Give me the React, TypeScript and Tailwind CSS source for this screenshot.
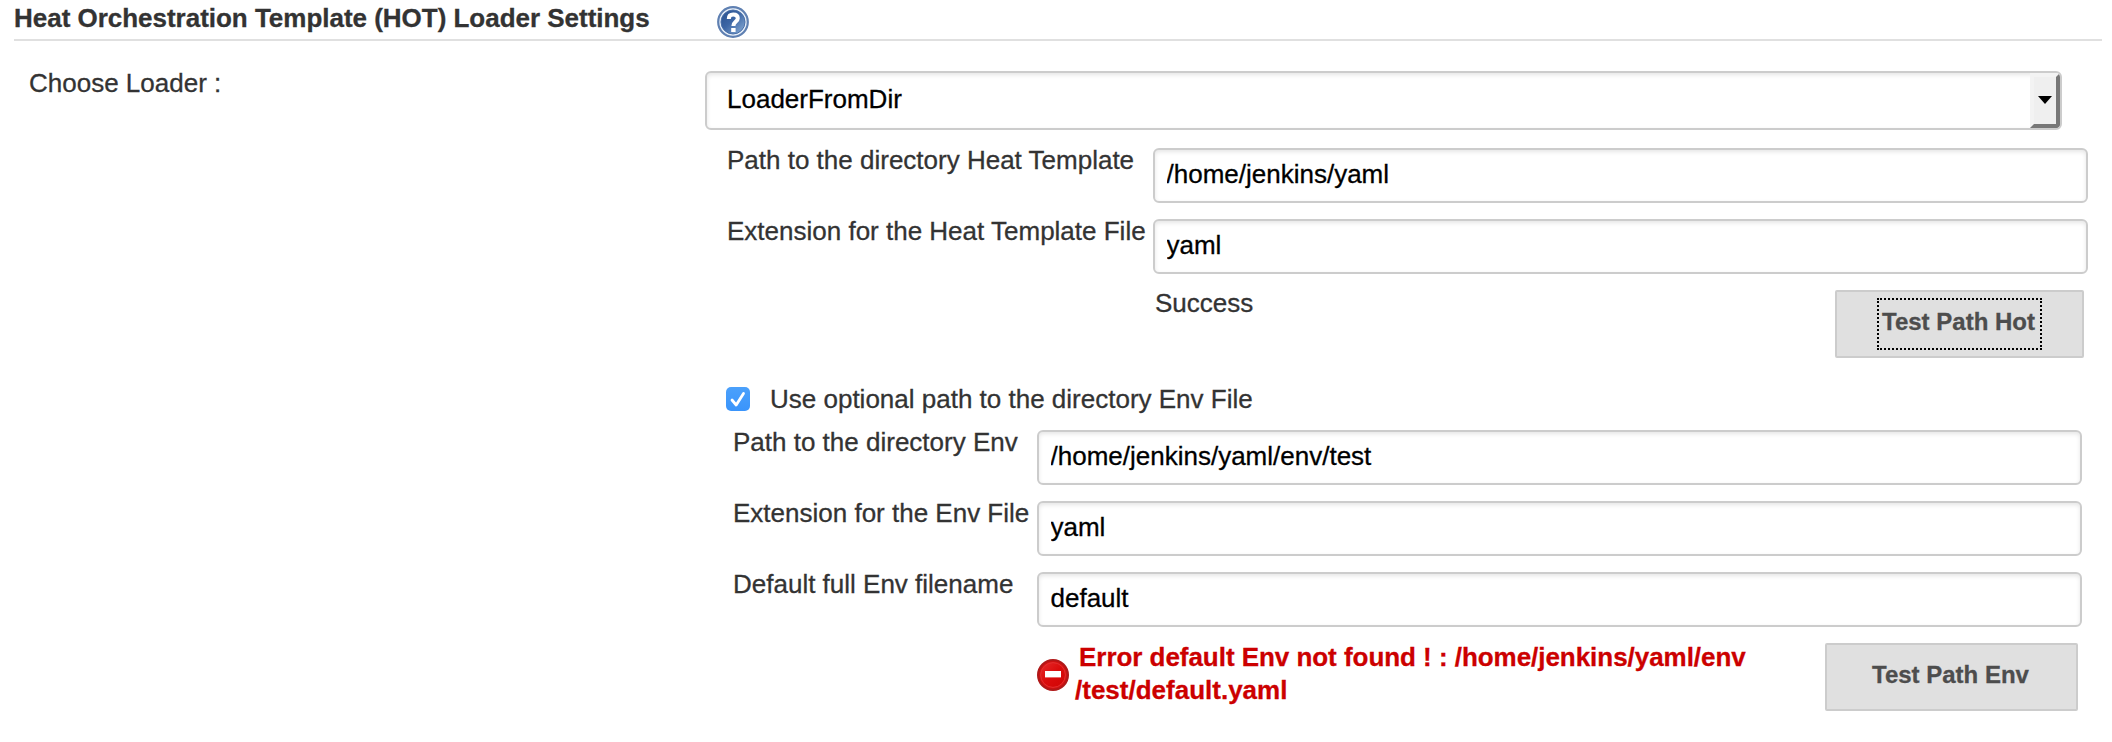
import React from "react";

const FONT = "font-['Liberation_Sans',Arial,sans-serif]";

function Field({ label, value, labelClass }: { label: string; value: string; labelClass: string }) {
  return (
    <label className="flex h-[71px]">
      <span className={`shrink-0 whitespace-nowrap ${labelClass}`}>{label}</span>
      <input
        type="text"
        defaultValue={value}
        className="h-[55px] min-w-0 flex-1 rounded-[6px] border-2 border-[#ccc] bg-white pt-[9px] pr-[12px] pb-[12px] pl-[11.5px] leading-[30px] text-black shadow-[inset_0_2px_4px_rgba(0,0,0,0.1)] outline-none"
      />
    </label>
  );
}

function HelpIcon() {
  return (
    <svg viewBox="0 0 32 32" className="block h-8 w-8">
      <defs>
        <linearGradient id="help-fill" x1="0" y1="0" x2="1" y2="1">
          <stop offset="0" stopColor="#28508e" />
          <stop offset="0.45" stopColor="#3c66a5" />
          <stop offset="1" stopColor="#8db0d8" />
        </linearGradient>
      </defs>
      <circle cx="16" cy="16" r="14.8" fill="#e6eef8" stroke="#5f80b2" strokeWidth="2.2" />
      <circle cx="16" cy="16" r="12" fill="url(#help-fill)" stroke="#4a70a9" strokeWidth="1" />
      <path d="M11.8 13C11.8 9.8 13.6 8.6 16.2 8.6C19 8.6 20.8 9.8 20.8 12.2C20.8 15.6 16.4 15.4 16.4 20" fill="none" stroke="#fff" strokeWidth="4" />
      <rect x="14.2" y="22" width="4.4" height="4" fill="#fff" />
    </svg>
  );
}

function ErrorIcon() {
  return (
    <svg viewBox="0 0 32 32" className="block h-8 w-8">
      <defs>
        <linearGradient id="error-fill" x1="0" y1="0" x2="1" y2="1">
          <stop offset="0" stopColor="#e62a2a" />
          <stop offset="0.5" stopColor="#da0c0c" />
          <stop offset="1" stopColor="#d00404" />
        </linearGradient>
      </defs>
      <circle cx="16" cy="16" r="14.9" fill="#d81010" stroke="#b01818" strokeWidth="2.2" />
      <circle cx="16" cy="16" r="12.4" fill="url(#error-fill)" stroke="#e23030" strokeWidth="1" />
      <rect x="8" y="12" width="16" height="6.4" fill="#fff" />
    </svg>
  );
}

export default function App() {
  return (
    <main className={`h-[742px] w-[2112px] overflow-hidden bg-white text-[26px] leading-[30px] text-[#333] [-webkit-text-stroke:0.3px] ${FONT}`}>
      <header className="ml-[14px] flex h-[41px] w-[2088px] border-b-2 border-[#e0e0e0] pt-[3px]">
        <h2 className="w-[703px] font-bold tracking-[-0.02px] whitespace-nowrap">Heat Orchestration Template (HOT) Loader Settings</h2>
        <div className="pt-[3px]">
          <HelpIcon />
        </div>
      </header>

      <div className="flex pt-[30px]">
        <div className="w-[705px] shrink-0 pl-[29px]">
          <span className="-mt-[3px] block">Choose Loader :</span>
        </div>

        <div className="flex w-[1383px] flex-col">
          <div className="flex h-[59px] w-[1357px] overflow-hidden rounded-[6px] border-2 border-[#ccc] shadow-[inset_0_2px_4px_rgba(0,0,0,0.1)]">
            <span className="flex-1 pt-[11px] pl-[20px] text-black">LoaderFromDir</span>
            <div className="flex w-[30px] justify-center rounded-r-[4px] border-4 border-t-[#f3f3f3] border-r-[#777] border-b-[#777] border-l-[#f3f3f3] bg-[#efefef] pt-[19px]">
              <svg viewBox="0 0 14 8" className="h-2 w-[14px] shrink-0">
                <path d="M0 0H14L7 8Z" fill="#000" />
              </svg>
            </div>
          </div>

          <section className="mt-[18px] pl-[22px]">
            <Field label="Path to the directory Heat Template" value="/home/jenkins/yaml" labelClass="w-[426px] -mt-[3px]" />
            <Field label="Extension for the Heat Template File" value="yaml" labelClass="w-[426px] -mt-[3px]" />
            <div className="flex h-[97px] justify-between pr-[4px] pl-[428px]">
              <span className="-mt-[2px]">Success</span>
              <button className="flex h-[68px] w-[249px] justify-center rounded-[2px] border-2 border-[#ccc] bg-[#e0e0e0] pt-[6px] text-[24px] font-bold text-[#4d4d4d]">
                <span className="flex h-[52px] w-[165px] justify-center border-2 border-dotted border-black pt-[8px] pr-[2px] leading-[28px] whitespace-nowrap">Test Path Hot</span>
              </button>
            </div>
          </section>

          <label className="flex h-[43px] pl-[21px]">
            <svg viewBox="0 0 24 24" className="h-6 w-6">
              <defs>
                <linearGradient id="check-fill" x1="0" y1="0" x2="0" y2="1">
                  <stop offset="0" stopColor="#4ba0fb" />
                  <stop offset="1" stopColor="#3a94fb" />
                </linearGradient>
              </defs>
              <rect width="24" height="24" rx="5" fill="url(#check-fill)" />
              <path d="M6 13L10.2 18L17.5 6.5" fill="none" stroke="#fff" strokeWidth="2.8" strokeLinecap="round" strokeLinejoin="round" />
            </svg>
            <span className="-mt-[3px] pl-[20px]">Use optional path to the directory Env File</span>
          </label>

          <section className="w-[1377px] pl-[28px]">
            <Field label="Path to the directory Env" value="/home/jenkins/yaml/env/test" labelClass="w-[304px] -mt-[3px]" />
            <Field label="Extension for the Env File" value="yaml" labelClass="w-[304px] -mt-[3px]" />
            <Field label="Default full Env filename" value="default" labelClass="w-[304px] -mt-[3px]" />
            <div className="flex justify-between pr-[4px] pl-[304px]">
              <div className="flex font-bold text-[#cc0000]">
                <div className="w-[38px] pt-[16px]">
                  <ErrorIcon />
                </div>
                <p className="leading-[33px] whitespace-nowrap">
                  <span className="-mt-[2px] block pl-[4px] tracking-[-0.04px]">Error default Env not found ! : /home/jenkins/yaml/env</span>
                  <span className="block">/test/default.yaml</span>
                </p>
              </div>
              <button className="flex h-[68px] w-[253px] justify-center rounded-[2px] border-2 border-[#ccc] bg-[#e0e0e0] pt-[16px] pr-[2px] text-[24px] leading-[28px] font-bold text-[#4d4d4d]">
                Test Path Env
              </button>
            </div>
          </section>
        </div>
      </div>
    </main>
  );
}
